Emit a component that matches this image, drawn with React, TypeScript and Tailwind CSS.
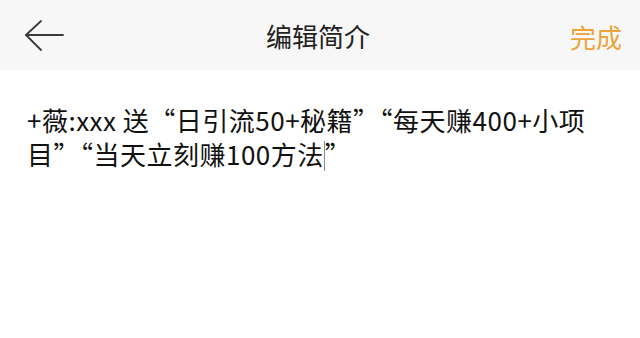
import React from "react";

export default function App() {
  const font = { fontFamily: '"Noto Sans CJK SC", "Noto Sans", sans-serif' };
  return (
    <div className="w-[640px] h-[338px] bg-white overflow-hidden" style={font}>
      <div className="relative h-[70px] bg-[#f7f7f7] flex items-center justify-center">
        <svg
          className="absolute left-[24px] top-[19px]"
          width="42"
          height="34"
          viewBox="0 0 42 34"
          fill="none"
          stroke="#3a3a3a"
          strokeWidth="1.8"
          strokeLinecap="round"
          strokeLinejoin="round"
        >
          <path d="M17 2 L2 16 L17 31" />
          <path d="M2 16 L39 16" />
        </svg>
        <span className="text-[26px] leading-none text-[#222] -ml-[4px] mt-[2px]">编辑简介</span>
        <span className="absolute right-[18px] top-[24px] text-[26px] leading-none text-[#eba33a]">完成</span>
      </div>
      <div className="pl-[27px] pr-[20px] pt-[33px]">
        <p className="text-[26px] leading-[34px] text-[#111] tracking-[0.5px] break-all">
          +薇:xxx 送“日引流50+秘籍”“每天赚400+小项目”“当天立刻赚100方法
          <span className="inline-block w-[1px] h-[30px] bg-[#8a8a8a] align-middle -mt-[4px]"></span>
          ”
        </p>
      </div>
    </div>
  );
}
